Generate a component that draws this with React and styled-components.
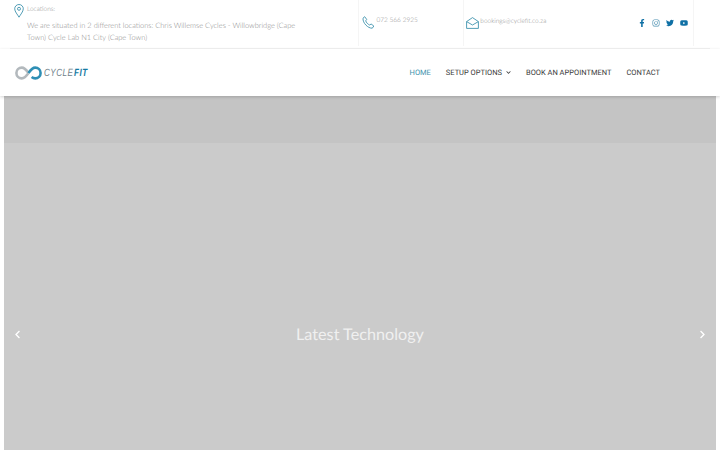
import React from 'react';
import styled, { createGlobalStyle } from 'styled-components';
import { FaFacebookF, FaInstagram, FaTwitter, FaYoutube, FaChevronDown, FaChevronLeft, FaChevronRight } from 'react-icons/fa';

const GlobalStyle = createGlobalStyle`
  html, body {
    margin: 0;
    padding: 0;
    width: 720px;
    height: 450px;
    overflow: hidden;
    background: #fff;
    font-family: 'Lato', sans-serif;
    text-rendering: geometricPrecision;
  }
  * { box-sizing: border-box; }
`;

const App = () => {
  return (
    <Page>
      <GlobalStyle />
      <TopBar>
        <LocationCell>
          <LocationHead>
            <svg width="10" height="14" viewBox="0 0 10 14" fill="none" stroke="#3f93ae" strokeWidth="0.9">
              <path d="M5 13.2C3.6 10.6 .7 7.6 .7 4.8a4.3 4.3 0 0 1 8.6 0C9.3 7.6 6.4 10.6 5 13.2z" />
              <circle cx="5" cy="4.8" r="1.5" />
            </svg>
            <SmallLabel>Locations:</SmallLabel>
          </LocationHead>
          <LocationText>
            We are situated in 2 different locations: Chris Willemse Cycles - Willowbridge (Cape Town) Cycle Lab N1 City (Cape Town)
          </LocationText>
        </LocationCell>
        <PhoneCell>
          <svg width="13" height="13" viewBox="0 0 13 13" fill="none" stroke="#3f93ae" strokeWidth="0.9">
            <path d="M1 2.2 2.7.7l2 2.7-1 1.4c.6 1.8 2.2 3.5 4 4.2l1.4-1 2.7 2-1.5 2.2C6 12.4.6 7 1 2.2z" />
          </svg>
          <ContactText>072 566 2925</ContactText>
        </PhoneCell>
        <MailCell>
          <svg width="13" height="12" viewBox="0 0 13 12" fill="none" stroke="#3f93ae" strokeWidth="0.9">
            <path d="M.6 4.6 6.5.6l5.9 4v6.8H.6z" />
            <path d="M.6 4.6 6.5 8l5.9-3.4" />
          </svg>
          <ContactText>bookings@cyclefit.co.za</ContactText>
        </MailCell>
        <SocialCell>
          <SocialLink><FaFacebookF /></SocialLink>
          <SocialLink $faint><FaInstagram /></SocialLink>
          <SocialLink><FaTwitter /></SocialLink>
          <SocialLink><FaYoutube /></SocialLink>
        </SocialCell>
      </TopBar>

      <Header>
        <Logo>
          <svg width="27" height="14" viewBox="0 0 27 14" fill="none" strokeWidth="2.6">
            <path d="M13.5 7C11 3.4 9.2 1.6 6.8 1.6a5.4 5.4 0 0 0 0 10.8c2.4 0 4.2-1.8 6.7-5.4" stroke="#b3b9bd" />
            <path d="M13.5 7c2.5-3.6 4.3-5.4 6.7-5.4a5.4 5.4 0 0 1 0 10.8c-1.3 0-2.6-.5-3.6-1.3" stroke="#2e8fb5" />
          </svg>
          <LogoText>CYCLE<LogoAccent>FIT</LogoAccent></LogoText>
        </Logo>
        <Nav>
          <NavItem $active>HOME</NavItem>
          <NavItem>SETUP OPTIONS<FaChevronDown size={5} /></NavItem>
          <NavItem>BOOK AN APPOINTMENT</NavItem>
          <NavItem>CONTACT</NavItem>
        </Nav>
      </Header>

      <Hero>
        <HeroBand />
        <Slide>
          <Arrow><FaChevronLeft size={9} /></Arrow>
          <SlideTitle>Latest Technology</SlideTitle>
          <Arrow><FaChevronRight size={9} /></Arrow>
        </Slide>
      </Hero>
    </Page>
  );
};

const Page = styled.div`
  width: 720px;
  height: 450px;
  display: flex;
  flex-direction: column;
  overflow: hidden;
  background: #fff;
`;

const TopBar = styled.div`
  height: 49px;
  flex: none;
  margin: 0 10px;
  padding-right: 16px;
  display: flex;
  border-bottom: 1px solid #f3f3f3;
`;

const LocationCell = styled.div`
  width: 349px;
  padding: 4px 50px 0 4px;
`;

const LocationHead = styled.div`
  display: flex;
  gap: 3px;
  align-items: flex-start;
`;

const SmallLabel = styled.span`
  padding-top: 1px;
  font-size: 6.5px;
  font-weight: 300;
  line-height: 10px;
  color: #8e8e8e;
`;

const LocationText = styled.div`
  margin: 2px 0 0 13px;
  font-size: 7.45px;
  font-weight: 300;
  line-height: 11.5px;
  color: #8a8a8a;
`;

const PhoneCell = styled.div`
  width: 105px;
  height: 46px;
  padding: 16px 0 0 3px;
  display: flex;
  gap: 1px;
  align-items: flex-start;
  border-left: 1px solid #f5f5f5;
`;

const MailCell = styled(PhoneCell)`
  width: 125px;
  padding: 17px 0 0 2px;
`;

const ContactText = styled.span`
  font-size: 6.5px;
  font-weight: 300;
  line-height: 10px;
  color: #8e8e8e;
`;

const SocialCell = styled.div`
  width: 106px;
  height: 46px;
  padding: 0 0 0 50px;
  display: flex;
  gap: 6px;
  align-items: center;
  border-right: 1px solid #f5f5f5;
`;

const SocialLink = styled.span`
  width: 8px;
  display: flex;
  justify-content: center;
  font-size: 8px;
  color: ${({ $faint }) => ($faint ? '#4a8fb0' : '#0f70a5')};
`;

const Header = styled.div`
  height: 47px;
  flex: none;
  padding: 0 60px 0 15px;
  display: flex;
  align-items: center;
  justify-content: space-between;
  position: relative;
  z-index: 1;
  box-shadow: 0 1px 3px rgba(0, 0, 0, 0.18);
`;

const Logo = styled.div`
  display: flex;
  align-items: center;
  gap: 2px;
`;

const LogoText = styled.span`
  display: inline-block;
  font-family: 'Liberation Sans', sans-serif;
  font-size: 10.5px;
  font-style: italic;
  letter-spacing: 0.6px;
  color: #6f7f8a;
  transform: scaleX(0.77);
  transform-origin: left center;
`;

const LogoAccent = styled.span`
  margin-left: 1px;
  font-weight: 700;
  color: #157aa3;
`;

const Nav = styled.nav`
  display: flex;
  gap: 15px;
`;

const NavItem = styled.span`
  display: flex;
  align-items: center;
  gap: 4px;
  font-family: 'Roboto', sans-serif;
  font-size: 7.5px;
  line-height: 12px;
  color: ${({ $active }) => ($active ? '#3f93ae' : '#3a3a3a')};
`;

const Hero = styled.div`
  flex: none;
  margin: 0 4px;
  display: flex;
  flex-direction: column;
  background: #cbcbcb;
`;

const HeroBand = styled.div`
  height: 47px;
  background: #c4c4c4;
`;

const Slide = styled.div`
  height: 382px;
  padding: 0 9px;
  display: flex;
  align-items: center;
  justify-content: space-between;
`;

const SlideTitle = styled.h2`
  margin: 0;
  font-size: 16.2px;
  font-weight: 400;
  color: #f0f0f0;
`;

const Arrow = styled.span`
  display: flex;
  color: #fff;
`;

export default App;
